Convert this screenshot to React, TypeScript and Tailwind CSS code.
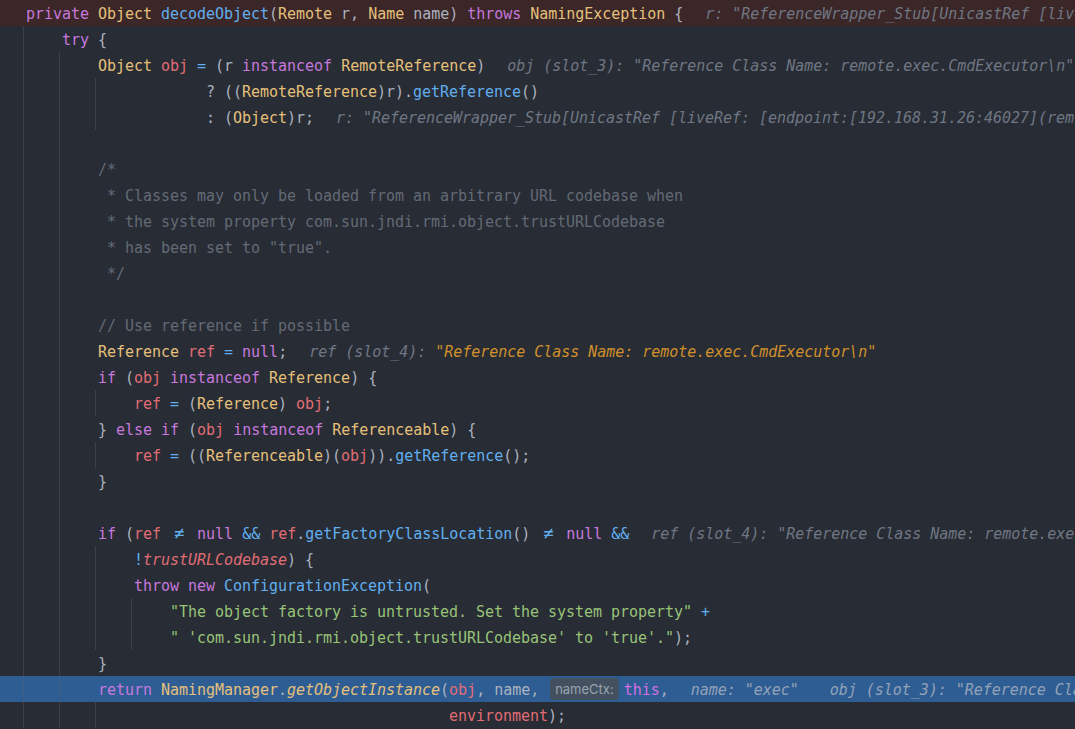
import React from 'react'

// One Dark-ish palette
const K = 'text-[#c678dd]'
const T = 'text-[#e5c07b]'
const F = 'text-[#61afef]'
const V = 'text-[#e06c75]'
const S = 'text-[#98c379]'
const O = 'text-[#61afef]'
const C = 'text-[#636a76]'
const H = 'italic text-[#6f7784]'
const HB = 'italic text-[#93a2b6]'
const CHG = 'italic text-[#d0902c]'

type Seg = { t: string; c?: string; ne?: boolean; inlay?: boolean }
type Line = { segs: Seg[]; guides: number; bg?: string }

const s = (t: string, c?: string): Seg => ({ t, c })
const ne = (): Seg => ({ t: '\u2260', ne: true })
const inlay = (t: string): Seg => ({ t, inlay: true })
const sp = (n: number) => s(' '.repeat(n))

const GUIDE_POS = ['left-[23px]', 'left-[59px]', 'left-[95px]', 'left-[131px]']

const lines: Line[] = [
  {
    guides: 0,
    bg: 'bg-[#3b2628]',
    segs: [
      s('private', K), s(' '), s('Object', T), s(' '), s('decodeObject', F), s('('), s('Remote', T), s(' r, '),
      s('Name', T), s(' name) '), s('throws', K), s(' '), s('NamingException', T), s(' {'),
      s('r: "ReferenceWrapper_Stub[UnicastRef [liveRef: [endpoint:[192.168.31.26:46027](remote),objID:[', H + ' ml-[22px]'),
    ],
  },
  { guides: 1, segs: [sp(4), s('try', K), s(' {')] },
  {
    guides: 2,
    segs: [
      sp(8), s('Object', T), s(' '), s('obj', V), s(' '), s('=', O), s(' (r '), s('instanceof', K), s(' '),
      s('RemoteReference', T), s(')'),
      s('obj (slot_3): "Reference Class Name: remote.exec.CmdExecutor\\n"', H + ' ml-[22px]'),
    ],
  },
  {
    guides: 3,
    segs: [sp(20), s('? (('), s('RemoteReference', T), s(')r).'), s('getReference', F), s('()')],
  },
  {
    guides: 3,
    segs: [
      sp(20), s(': ('), s('Object', T), s(')r;'),
      s('r: "ReferenceWrapper_Stub[UnicastRef [liveRef: [endpoint:[192.168.31.26:46027](remote),objID:[', H + ' ml-[22px]'),
    ],
  },
  { guides: 2, segs: [] },
  { guides: 2, segs: [sp(8), s('/*', C)] },
  { guides: 2, segs: [sp(8), s(' * Classes may only be loaded from an arbitrary URL codebase when', C)] },
  { guides: 2, segs: [sp(8), s(' * the system property com.sun.jndi.rmi.object.trustURLCodebase', C)] },
  { guides: 2, segs: [sp(8), s(' * has been set to "true".', C)] },
  { guides: 2, segs: [sp(8), s(' */', C)] },
  { guides: 2, segs: [] },
  { guides: 2, segs: [sp(8), s('// Use reference if possible', C)] },
  {
    guides: 2,
    segs: [
      sp(8), s('Reference', T), s(' '), s('ref', V), s(' '), s('=', O), s(' '), s('null', K), s(';'),
      s('ref (slot_4): ', H + ' ml-[22px]'), s('"Reference Class Name: remote.exec.CmdExecutor\\n"', CHG),
    ],
  },
  {
    guides: 2,
    segs: [sp(8), s('if', K), s(' ('), s('obj', V), s(' '), s('instanceof', K), s(' '), s('Reference', T), s(') {')],
  },
  {
    guides: 3,
    segs: [sp(12), s('ref', V), s(' '), s('=', O), s(' ('), s('Reference', T), s(') '), s('obj', V), s(';')],
  },
  {
    guides: 2,
    segs: [
      sp(8), s('} '), s('else', K), s(' '), s('if', K), s(' ('), s('obj', V), s(' '), s('instanceof', K), s(' '),
      s('Referenceable', T), s(') {'),
    ],
  },
  {
    guides: 3,
    segs: [
      sp(12), s('ref', V), s(' '), s('=', O), s(' (('), s('Referenceable', T), s(')('), s('obj', V), s(')).'),
      s('getReference', F), s('();'),
    ],
  },
  { guides: 2, segs: [sp(8), s('}')] },
  { guides: 2, segs: [] },
  {
    guides: 2,
    segs: [
      sp(8), s('if', K), s(' ('), s('ref', V), s(' '), ne(), s(' '), s('null', K), s(' '), s('&&', O), s(' '),
      s('ref', V), s('.'), s('getFactoryClassLocation', F), s('() '), ne(), s(' '), s('null', K), s(' '),
      s('&&', O),
      s('ref (slot_4): "Reference Class Name: remote.exec.CmdExecutor\\n"', H + ' ml-[22px]'),
    ],
  },
  {
    guides: 3,
    segs: [sp(12), s('!', O), s('trustURLCodebase', V + ' italic'), s(') {')],
  },
  {
    guides: 3,
    segs: [sp(12), s('throw', K), s(' '), s('new', K), s(' '), s('ConfigurationException', F), s('(')],
  },
  {
    guides: 4,
    segs: [sp(16), s('"The object factory is untrusted. Set the system property"', S), s(' '), s('+', O)],
  },
  {
    guides: 4,
    segs: [sp(16), s('" \'com.sun.jndi.rmi.object.trustURLCodebase\' to \'true\'."', S), s(');')],
  },
  { guides: 2, segs: [sp(8), s('}')] },
  {
    guides: 2,
    bg: 'bg-[#2e5d94]',
    segs: [
      sp(8), s('return', K), s(' '), s('NamingManager', T), s('.'), s('getObjectInstance', T + ' italic'), s('('),
      s('obj', V), s(', name, '), inlay('nameCtx:'), s('this', 'text-[#d070e0]'), s(','),
      s('name: "exec"', HB + ' ml-[22px]'),
      s('obj (slot_3): "Reference Class Name: remote.exec.CmdExecutor\\n"', HB + ' ml-[31px]'),
    ],
  },
  { guides: 3, segs: [sp(47), s('environment', V), s(');')] },
]

function Row({ line }: { line: Line }) {
  return (
    <div className={`relative h-[26px] leading-[28px] whitespace-pre pl-[26px] overflow-hidden ${line.bg ?? ''}`}>
      {GUIDE_POS.slice(0, line.guides).map(g => (
        <span key={g} className={`absolute top-0 bottom-0 w-px bg-[#5a606c]/40 ${g}`} />
      ))}
      {line.segs.map((seg, i) => {
        if (seg.ne) {
          return (
            <span key={i} className={`inline-block w-[18px] text-center text-[17px] leading-none ${O}`}>
              {seg.t}
            </span>
          )
        }
        if (seg.inlay) {
          return (
            <span
              key={i}
              className="inline-block h-[22px] leading-[22px] align-top mt-[2px] ml-[2px] mr-[5px] px-[5px] rounded-[4px] bg-[#42505f] text-[#9aa4ae] text-[13px] font-['Inter',sans-serif] tracking-normal"
            >
              {seg.t}
            </span>
          )
        }
        return (
          <span key={i} className={seg.c}>
            {seg.t}
          </span>
        )
      })}
    </div>
  )
}

export default function App() {
  return (
    <div className="w-[1075px] h-[729px] overflow-hidden bg-[#282c34] text-[#abb2bf] font-['DejaVu_Sans_Mono',monospace] text-[15px] tracking-[-0.03px]">
      {lines.map((l, i) => (
        <Row key={i} line={l} />
      ))}
    </div>
  )
}
